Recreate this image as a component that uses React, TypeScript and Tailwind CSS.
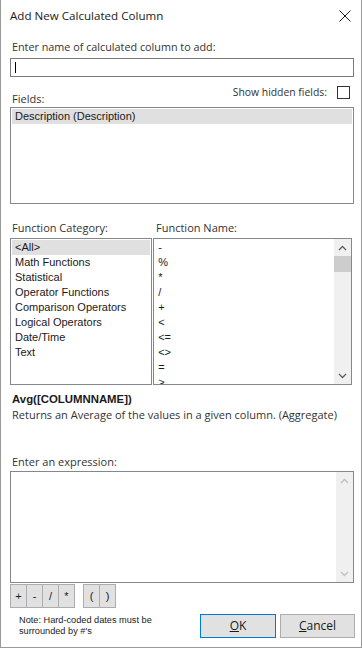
const categories = [
  'Math Functions',
  'Statistical',
  'Operator Functions',
  'Comparison Operators',
  'Logical Operators',
  'Date/Time',
  'Text',
];

const functionNames = ['-', '%', '*', '/', '+', '<', '<=', '<>', '=', '>'];

const opButtons = ['+', '-', '/', '*'];

function ChevronUp({ color }: { color: string }) {
  return (
    <svg width="9" height="6" viewBox="0 0 9 6">
      <path d="M1 5 L4.5 1.5 L8 5" fill="none" stroke={color} strokeWidth="1.3" />
    </svg>
  );
}

function ChevronDown({ color }: { color: string }) {
  return (
    <svg width="9" height="6" viewBox="0 0 9 6">
      <path d="M1 1 L4.5 4.5 L8 1" fill="none" stroke={color} strokeWidth="1.3" />
    </svg>
  );
}

export default function App() {
  const ui = { fontFamily: '"Open Sans", "Noto Sans", sans-serif' };
  const classic = { fontFamily: '"Liberation Sans", Arial, sans-serif' };

  return (
    <div className="w-[362px] h-[648px] bg-white border-x border-b border-[#9a9a9a] flex flex-col text-[#1a1a1a] overflow-hidden">
      {/* Title bar */}
      <div className="h-[31px] flex items-center justify-between pl-[9px] pr-[10px] shrink-0">
        <span className="text-[11.6px]" style={ui}>Add New Calculated Column</span>
        <svg width="12" height="12" viewBox="0 0 12 12" className="mt-[1px]">
          <path d="M0.5 0.5 L11.5 11.5 M11.5 0.5 L0.5 11.5" stroke="#1a1a1a" strokeWidth="1" />
        </svg>
      </div>

      <div className="px-[9px] flex flex-col">
        {/* Column name */}
        <div className="mt-[8px] pl-[2px] h-[16px] leading-[16px] text-[10.8px] text-[#333]" style={ui}>
          Enter name of calculated column to add:
        </div>
        <div className="mt-[3px] w-[344px] h-[19px] border border-[#7a7a7a] flex items-center pl-[4px]">
          <div className="w-px h-[11px] bg-black" />
        </div>

        {/* Fields */}
        <div className="mt-[8px] h-[21px] flex items-end justify-between">
          <span className="pl-[2px] text-[11px] leading-[14px] text-[#333]" style={ui}>Fields:</span>
          <div className="flex items-center gap-[10px] self-start pr-[2px]">
            <span className="text-[10.4px] leading-[14px] text-[#333]" style={ui}>Show hidden fields:</span>
            <div className="w-[13px] h-[13px] border border-[#333] bg-white" />
          </div>
        </div>
        <div className="mt-[1px] w-[344px] h-[97px] border border-[#828790] p-px">
          <div className="h-[15px] bg-[#e0e0e0] pl-[3px] text-[11px] leading-[15px]" style={classic}>
            Description (Description)
          </div>
        </div>

        {/* Function lists */}
        <div className="mt-[16px] h-[15px] flex text-[11px] leading-[15px] text-[#333]" style={ui}>
          <span className="w-[144px] pl-[2px]">Function Category:</span>
          <span className="pl-[2px]">Function Name:</span>
        </div>
        <div className="mt-[3px] flex gap-px">
          <div className="w-[143px] h-[147px] border border-[#828790] p-px text-[11px] leading-[15px]" style={classic}>
            <div className="h-[15px] bg-[#e0e0e0] pl-[3px]">&lt;All&gt;</div>
            {categories.map((c) => (
              <div key={c} className="h-[15px] pl-[3px]">{c}</div>
            ))}
          </div>
          <div className="w-[200px] h-[147px] border border-[#828790] flex overflow-hidden">
            <div className="flex-1 pt-px pl-[4px] text-[11px] leading-[15px] overflow-hidden" style={classic}>
              {functionNames.map((f) => (
                <div key={f} className="h-[15px]">{f}</div>
              ))}
            </div>
            <div className="w-[17px] bg-[#f0f0f0] flex flex-col items-center">
              <div className="h-[17px] flex items-center justify-center">
                <ChevronUp color="#606060" />
              </div>
              <div className="w-[17px] h-[16px] bg-[#cdcdcd]" />
              <div className="flex-1" />
              <div className="h-[17px] flex items-center justify-center">
                <ChevronDown color="#606060" />
              </div>
            </div>
          </div>
        </div>

        {/* Function description */}
        <div className="mt-[6px] pl-[2px] h-[16px] leading-[16px] text-[11.4px] font-bold" style={classic}>
          Avg([COLUMNNAME])
        </div>
        <div className="pl-[2px] h-[15px] leading-[15px] text-[11px] text-[#333]" style={ui}>
          Returns an Average of the values in a given column. (Aggregate)
        </div>

        {/* Expression */}
        <div className="mt-[32px] pl-[2px] h-[15px] leading-[15px] text-[11px] text-[#333]" style={ui}>
          Enter an expression:
        </div>
        <div className="mt-[2px] w-[344px] h-[112px] border border-[#828790] flex justify-end">
          <div className="w-[17px] bg-[#f0f0f0] flex flex-col">
            <div className="h-[17px] flex items-center justify-center">
              <ChevronUp color="#c0c0c0" />
            </div>
            <div className="flex-1" />
            <div className="h-[17px] flex items-center justify-center">
              <ChevronDown color="#c0c0c0" />
            </div>
          </div>
        </div>

        {/* Operator buttons */}
        <div className="mt-px flex h-[24px] text-[11px]" style={classic}>
          {opButtons.map((b) => (
            <div key={b} className="w-[17px] h-[24px] bg-[#e1e1e1] border border-[#adadad] -mr-px flex items-center justify-center">
              {b}
            </div>
          ))}
          <div className="w-[9px]" />
          {['(', ')'].map((b) => (
            <div key={b} className="w-[17px] h-[24px] bg-[#e1e1e1] border border-[#adadad] -mr-px flex items-center justify-center">
              {b}
            </div>
          ))}
        </div>

        {/* Footer */}
        <div className="mt-[6px] flex items-start -mr-[3px]">
          <div className="flex-1 pl-[9px] pt-[1px] text-[9.2px] leading-[11px] text-[#222]" style={classic}>
            Note: Hard-coded dates must be<br />surrounded by #'s
          </div>
          <div className="w-[76px] h-[24px] bg-[#e1e1e1] border border-[#0078d7] flex items-center justify-center text-[12px]" style={ui}>
            <span><span className="underline">O</span>K</span>
          </div>
          <div className="ml-[4px] w-[75px] h-[24px] bg-[#e1e1e1] border border-[#adadad] flex items-center justify-center text-[12px]" style={ui}>
            <span><span className="underline">C</span>ancel</span>
          </div>
        </div>
      </div>
    </div>
  );
}
